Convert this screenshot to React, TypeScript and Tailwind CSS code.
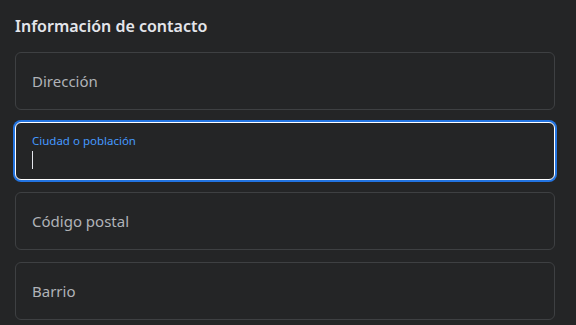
export default function App() {
  const fields = ['Dirección', 'Ciudad o población', 'Código postal', 'Barrio']
  return (
    <div className="min-h-[325px] w-[576px] bg-[#242526] pl-[15px] pr-[21px] pt-[13px] font-['Noto_Sans',sans-serif]">
      <h2 className="text-[16px] font-semibold leading-[26px] text-[#e4e6eb]">Información de contacto</h2>
      <div className="mt-[13px] flex flex-col gap-3">
        {fields.map(f =>
          f === 'Ciudad o población' ? (
            <div
              key={f}
              className="relative h-[58px] rounded-[6px] border-[1.5px] border-white bg-[#242526] ring-2 ring-[#2374e1]"
            >
              <span className="absolute left-[16px] top-[10px] text-[11.5px] leading-[16px] text-[#4599ff]">{f}</span>
              <span className="absolute left-[16px] top-[28px] h-[18px] w-px bg-[#e4e6eb]" />
            </div>
          ) : (
            <div key={f} className="flex h-[58px] items-center rounded-[6px] border border-[#3e4042] px-4">
              <span className="text-[15px] text-[#b0b3b8]">{f}</span>
            </div>
          )
        )}
      </div>
    </div>
  )
}
